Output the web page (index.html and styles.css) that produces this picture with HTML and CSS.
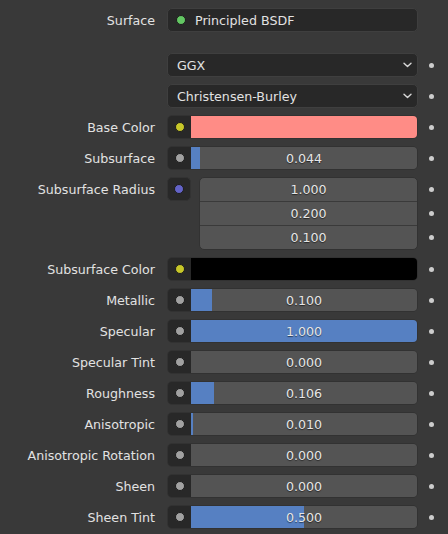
FILE: index.html
```html
<!DOCTYPE html>
<html>
<head>
<meta charset="utf-8">
<link rel="stylesheet" href="styles.css">
</head>
<body>
<div class="panel">
  <div class="label">Surface</div>
  <div class="menu shader"><i class="dot green"></i><span>Principled BSDF</span></div>
  <div class="bul empty"></div>

  <div class="label spaced"></div>
  <div class="menu spaced"><span>GGX</span><svg class="chev" width="9" height="6" viewBox="0 0 9 6"><path d="M1 1.2 L4.5 4.6 L8 1.2" fill="none" stroke="#d8d8d8" stroke-width="1.4" stroke-linecap="round" stroke-linejoin="round"/></svg></div>
  <div class="bul spaced"><i></i></div>

  <div class="label"></div>
  <div class="menu"><span>Christensen-Burley</span><svg class="chev" width="9" height="6" viewBox="0 0 9 6"><path d="M1 1.2 L4.5 4.6 L8 1.2" fill="none" stroke="#d8d8d8" stroke-width="1.4" stroke-linecap="round" stroke-linejoin="round"/></svg></div>
  <div class="bul"><i></i></div>

  <div class="label">Base Color</div>
  <div class="ctl"><span class="sock"><i class="dot yellow"></i></span><div class="swatch pink"></div></div>
  <div class="bul"><i></i></div>

  <div class="label">Subsurface</div>
  <div class="ctl"><span class="sock"><i class="dot grey"></i></span><div class="slider" style="--p:4%">0.044</div></div>
  <div class="bul"><i></i></div>

  <div class="label top">Subsurface Radius</div>
  <div class="vecrow"><span class="sock solo"><i class="dot purple"></i></span>
    <div class="vec"><div class="cell">1.000</div><div class="cell">0.200</div><div class="cell">0.100</div></div>
  </div>
  <div class="bul vbul"><i></i><i></i><i></i></div>

  <div class="label">Subsurface Color</div>
  <div class="ctl"><span class="sock"><i class="dot yellow"></i></span><div class="swatch black"></div></div>
  <div class="bul"><i></i></div>

  <div class="label">Metallic</div>
  <div class="ctl"><span class="sock"><i class="dot grey"></i></span><div class="slider" style="--p:9.2%">0.100</div></div>
  <div class="bul"><i></i></div>

  <div class="label">Specular</div>
  <div class="ctl"><span class="sock"><i class="dot grey"></i></span><div class="slider" style="--p:100%">1.000</div></div>
  <div class="bul"><i></i></div>

  <div class="label">Specular Tint</div>
  <div class="ctl"><span class="sock"><i class="dot grey"></i></span><div class="slider" style="--p:0%">0.000</div></div>
  <div class="bul"><i></i></div>

  <div class="label">Roughness</div>
  <div class="ctl"><span class="sock"><i class="dot grey"></i></span><div class="slider" style="--p:10.2%">0.106</div></div>
  <div class="bul"><i></i></div>

  <div class="label">Anisotropic</div>
  <div class="ctl"><span class="sock"><i class="dot grey"></i></span><div class="slider" style="--p:0.7%">0.010</div></div>
  <div class="bul"><i></i></div>

  <div class="label">Anisotropic Rotation</div>
  <div class="ctl"><span class="sock"><i class="dot grey"></i></span><div class="slider" style="--p:0%">0.000</div></div>
  <div class="bul"><i></i></div>

  <div class="label">Sheen</div>
  <div class="ctl"><span class="sock"><i class="dot grey"></i></span><div class="slider" style="--p:0%">0.000</div></div>
  <div class="bul"><i></i></div>

  <div class="label">Sheen Tint</div>
  <div class="ctl"><span class="sock"><i class="dot grey"></i></span><div class="slider" style="--p:50%">0.500</div></div>
  <div class="bul"><i></i></div>
</div>
</body>
</html>
```
FILE: styles.css
```css
html, body {
  margin: 0;
  padding: 0;
  background: #393939;
}
body {
  width: 448px;
  height: 534px;
  overflow: hidden;
  font-family: "DejaVu Sans", sans-serif;
  font-size: 12.65px;
  color: #e2e2e2;
}
.panel {
  display: grid;
  grid-template-columns: 167px 251px 30px;
  row-gap: 7px;
  padding-top: 8px;
  grid-auto-rows: minmax(24px, auto);
}
.label {
  box-sizing: border-box;
  padding-right: 12px;
  display: flex;
  align-items: center;
  justify-content: flex-end;
  height: 24px;
  white-space: nowrap;
}
.spaced { margin-top: 14px; }
.menu {
  box-sizing: border-box;
  height: 24px;
  background: #282828;
  border: 1px solid #3f3f3f;
  border-radius: 5px;
  display: flex;
  align-items: center;
  padding-left: 9px;
  padding-right: 5px;
}
.menu span { flex: 1; }
.menu .chev { display: block; }
.menu.shader { padding-left: 8px; }
.menu.shader .dot { margin-right: 9px; }
.bul {
  display: flex;
  flex-direction: column;
  height: 24px;
  justify-content: center;
}
.bul i {
  display: block;
  width: 5px;
  height: 5px;
  border-radius: 50%;
  background: #cdcdcd;
  margin-left: 11px;
}
.vbul {
  height: 73px;
  justify-content: space-around;
}
.ctl {
  box-sizing: border-box;
  height: 24px;
  display: flex;
  border: 1px solid #323232;
  border-radius: 5px;
  overflow: hidden;
}
.sock {
  width: 23px;
  flex: none;
  background: #282828;
  display: flex;
  align-items: center;
  justify-content: center;
}
.sock.solo {
  box-sizing: border-box;
  width: 24px;
  height: 24px;
  border: 1px solid #333;
  border-radius: 5px;
}
.dot {
  display: block;
  width: 10px;
  height: 10px;
  border-radius: 50%;
  box-sizing: border-box;
  border: 1px solid #1c1c1c;
}
.green { background: #63c763; }
.yellow { background: #c7c729; }
.grey { background: #a1a1a1; }
.purple { background: #6363c7; }
.swatch { flex: 1; }
.pink { background: #ff8c86; }
.black { background: #000; }
.slider {
  flex: 1;
  display: flex;
  align-items: center;
  justify-content: center;
  background: linear-gradient(to right, #5680c2 var(--p), #545454 var(--p));
  color: #e6e6e6;
  text-shadow: 0 1px 1px rgba(0, 0, 0, 0.55);
}
.vecrow {
  display: flex;
  gap: 8px;
  align-items: flex-start;
}
.vec {
  flex: 1;
  box-sizing: border-box;
  height: 73px;
  border: 1px solid #323232;
  border-radius: 5px;
  overflow: hidden;
  display: flex;
  flex-direction: column;
  background: #545454;
}
.cell {
  flex: 1;
  display: flex;
  align-items: center;
  justify-content: center;
  color: #e6e6e6;
  text-shadow: 0 1px 1px rgba(0, 0, 0, 0.55);
}
.cell + .cell { border-top: 1px solid #3a3a3a; }
```
